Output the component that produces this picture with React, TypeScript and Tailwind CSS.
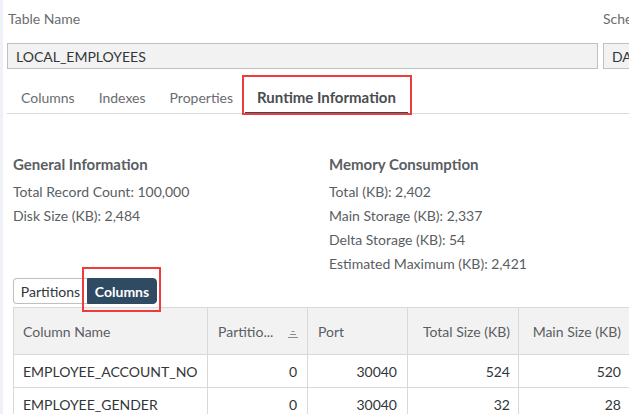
const rows = [
  { name: 'EMPLOYEE_ACCOUNT_NO', part: 0, port: 30040, total: 524, main: 520 },
  { name: 'EMPLOYEE_GENDER', part: 0, port: 30040, total: 32, main: 28 },
];

function SortIcon() {
  return (
    <svg width="12" height="9" viewBox="0 0 12 9" className="text-[#8a8d90] self-end mb-[3px]">
      <path d="M4.5 1.5h3M3 4.5h6M1 7.5h10" stroke="currentColor" strokeWidth="1" fill="none" />
    </svg>
  );
}

export default function App() {
  return (
    <div
      className="relative w-[629px] h-[414px] overflow-hidden bg-white text-[14px] text-[#32363a]"
      style={{ fontFamily: 'Lato, "Noto Sans", sans-serif' }}
    >
      {/* left rail */}
      <div className="absolute left-0 top-0 h-full w-[3px] bg-[#eef1f5]" />

      {/* header fields */}
      <div className="flex gap-[5px] pl-[7px] w-[900px]">
        <div className="w-[591px] shrink-0">
          <div className="pt-[9px] pl-[1px] h-[43px] text-[#6a6d70] leading-[20px]">Table Name</div>
          <div className="h-[26px] border border-[#bfbfbf] bg-[#f2f2f2] pl-[8px] flex items-center text-[#32363a]">
            LOCAL_EMPLOYEES
          </div>
        </div>
        <div className="w-[200px] shrink-0">
          <div className="pt-[9px] h-[43px] text-[#6a6d70] leading-[20px]">Schema</div>
          <div className="h-[26px] border border-[#bfbfbf] bg-[#f2f2f2] pl-[8px] flex items-center">DATA</div>
        </div>
      </div>

      {/* tabs */}
      <div className="ml-[7px] flex border-b border-[#d9d9d9] h-[45px] items-stretch pl-[2px]">
        <div className="px-[12px] pt-[12px] flex items-center text-[#6a6d70]">Columns</div>
        <div className="px-[12px] pt-[12px] flex items-center text-[#6a6d70]">Indexes</div>
        <div className="px-[12px] pt-[12px] flex items-center text-[#6a6d70]">Properties</div>
        <div className="relative px-[12px] pt-[12px] flex items-center font-bold text-[15px] text-[#4a4d50]">
          Runtime Information
          <div className="absolute left-0 right-0 bottom-[-1px] h-[2px] bg-[#354a5f]" />
          <div className="absolute -left-[3px] -right-[4px] top-[6px] bottom-[-2px] border-2 border-[#ee3b3b]" />
        </div>
      </div>

      {/* info */}
      <div className="flex pl-[13px] pt-[38px]">
        <div className="w-[316px]">
          <div className="font-bold text-[15px] text-[#5a5e62] leading-[24px] mb-[4px]">General Information</div>
          <div className="leading-[24px] text-[#5a5e62]">Total Record Count: 100,000</div>
          <div className="leading-[24px] text-[#5a5e62]">Disk Size (KB): 2,484</div>
        </div>
        <div>
          <div className="font-bold text-[15px] text-[#5a5e62] leading-[24px] mb-[4px]">Memory Consumption</div>
          <div className="leading-[24px] text-[#5a5e62]">Total (KB): 2,402</div>
          <div className="leading-[24px] text-[#5a5e62]">Main Storage (KB): 2,337</div>
          <div className="leading-[24px] text-[#5a5e62]">Delta Storage (KB): 54</div>
          <div className="leading-[24px] text-[#5a5e62]">Estimated Maximum (KB): 2,421</div>
        </div>
      </div>

      {/* segmented button */}
      <div className="mt-[2px] ml-[13px] flex h-[26px]">
        <div className="w-[74px] justify-center flex items-center border border-[#bfbfbf] border-r-0 rounded-l-[4px] text-[#32363a]">
          Partitions
        </div>
        <div className="relative w-[70px] justify-center flex items-center bg-[#2f4a63] text-white font-bold rounded-r-[4px] border border-[#2f4a63]">
          Columns
          <div className="absolute -left-[6px] -right-[5px] -top-[12px] -bottom-[9px] border-2 border-[#ee3b3b]" />
        </div>
      </div>

      {/* table */}
      <div className="mt-[3px] ml-[13px] w-[700px]">
        <table className="border-collapse text-[#32363a]">
          <thead>
            <tr className="bg-[#f2f2f2] h-[47px] text-[#5a5e62]">
              <th className="w-[194px] border border-[#d9d9d9] font-normal text-left pl-[9px]">Column Name</th>
              <th className="w-[100px] border border-[#d9d9d9] font-normal text-left pl-[10px]">
                <div className="flex items-center justify-between pr-[8px]">
                  <span>Partitio...</span>
                  <SortIcon />
                </div>
              </th>
              <th className="w-[100px] border border-[#d9d9d9] font-normal text-left pl-[10px]">Port</th>
              <th className="w-[111px] border border-[#d9d9d9] font-normal text-right pr-[8px]">Total Size (KB)</th>
              <th className="w-[113px] border border-[#d9d9d9] font-normal text-right pr-[10px]">Main Size (KB)</th>
            </tr>
          </thead>
          <tbody>
            {rows.map((r) => (
              <tr key={r.name} className="h-[33px]">
                <td className="border border-[#d9d9d9] pl-[9px]">{r.name}</td>
                <td className="border border-[#d9d9d9] text-right pr-[10px]">{r.part}</td>
                <td className="border border-[#d9d9d9] text-right pr-[10px]">{r.port}</td>
                <td className="border border-[#d9d9d9] text-right pr-[8px]">{r.total}</td>
                <td className="border border-[#d9d9d9] text-right pr-[10px]">{r.main}</td>
              </tr>
            ))}
          </tbody>
        </table>
      </div>
    </div>
  );
}
